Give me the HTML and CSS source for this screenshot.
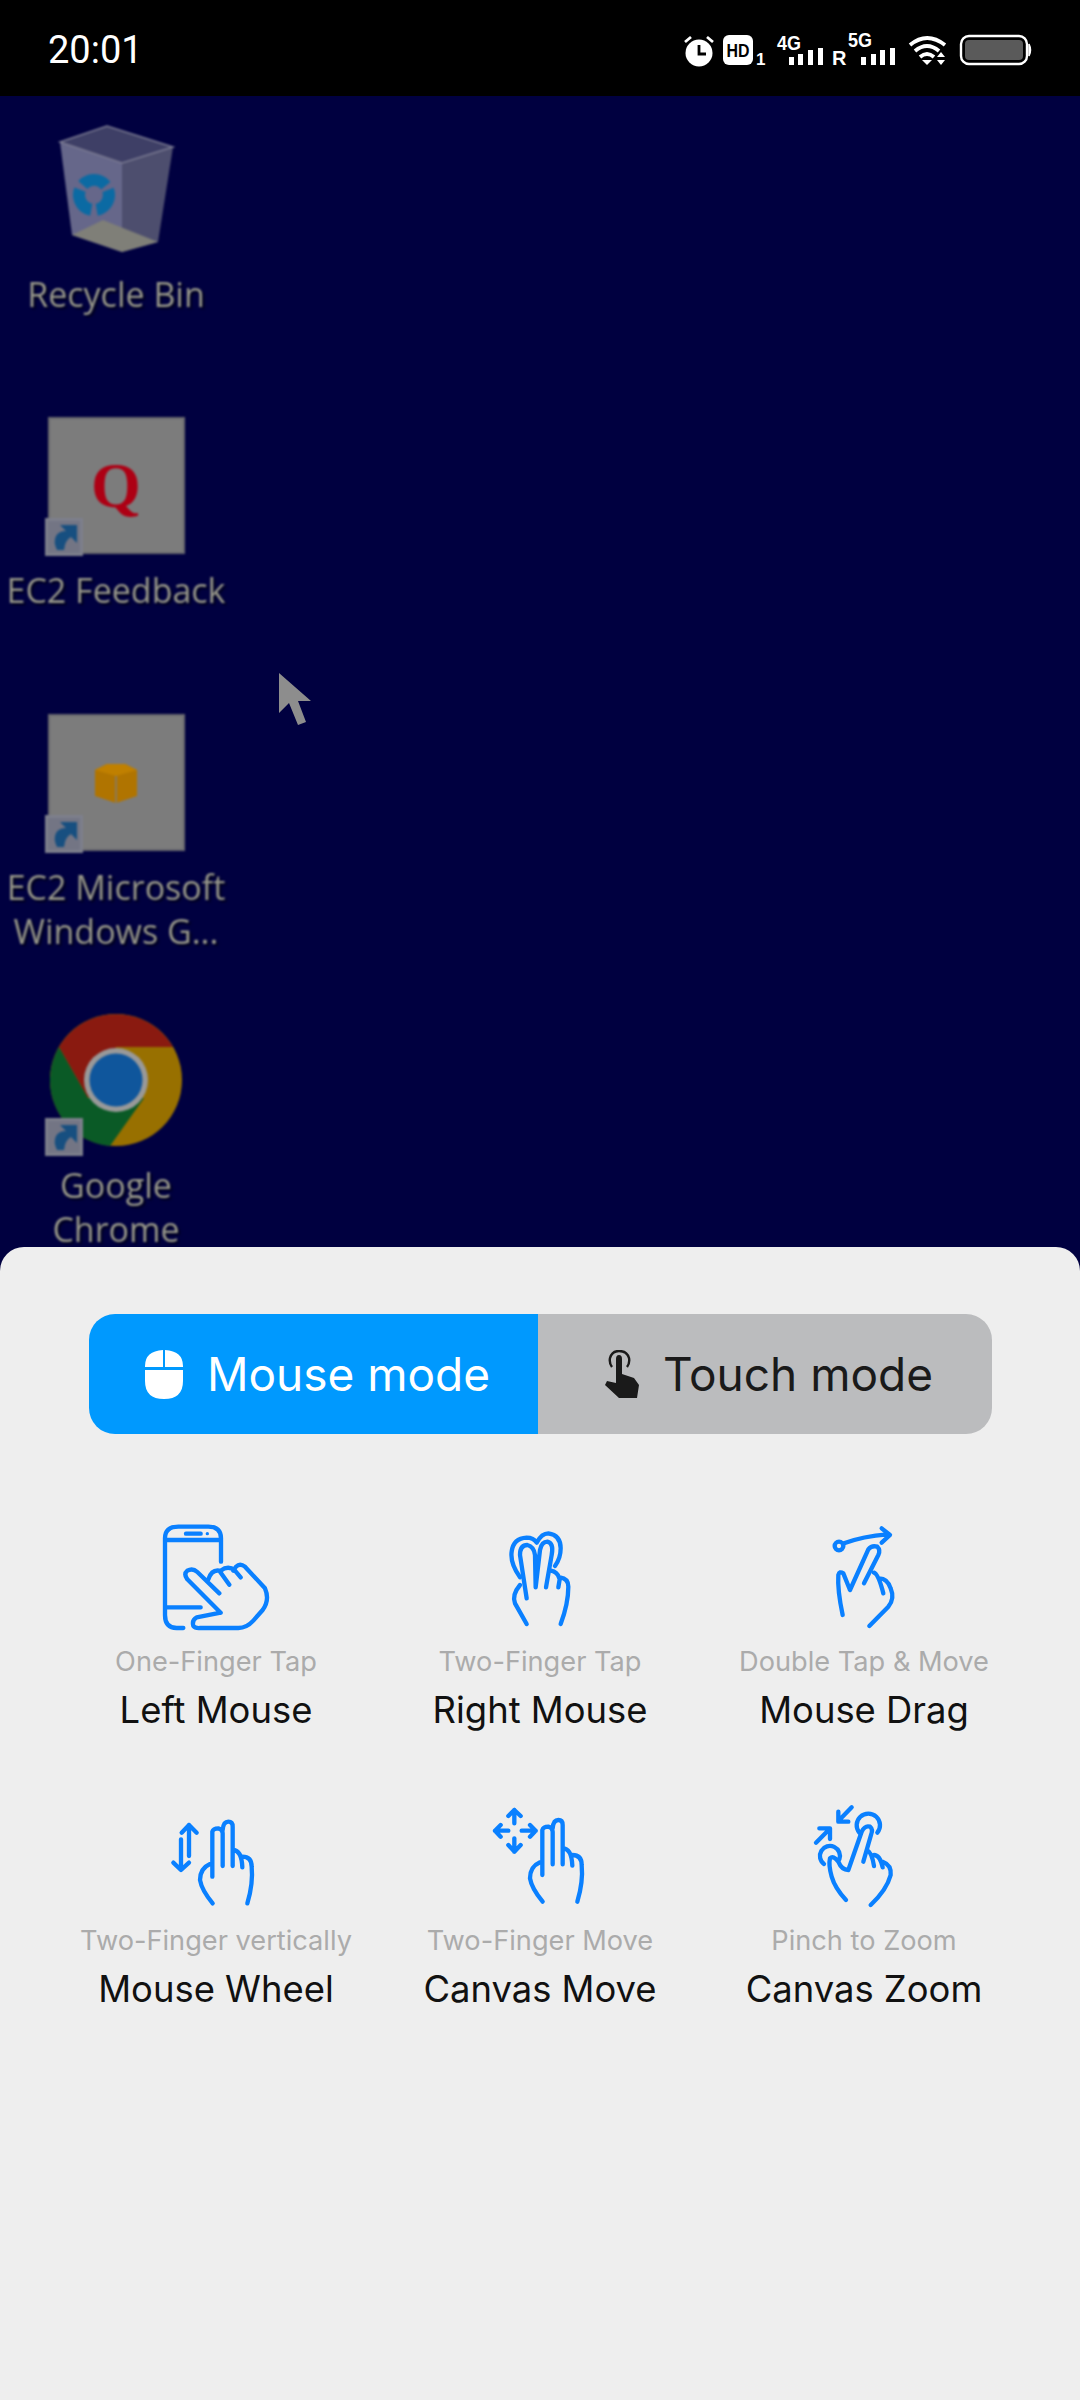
FILE: index.html
```html
<!DOCTYPE html>
<html lang="en">
<head>
<meta charset="utf-8">
<title>Remote desktop</title>
<link rel="stylesheet" href="styles.css">
</head>
<body>
<div class="screen">
  <header class="status">
    <span class="clock">20:01</span>
    <svg class="status-icons" viewBox="680 0 352 96" width="352" height="96">
      <circle cx="699" cy="53" r="13.5" fill="#fff"/>
      <path d="M699 45V54H706" fill="none" stroke="#000" stroke-width="2.8"/>
      <path d="M685 42L691 37M713 42L707 37" stroke="#fff" stroke-width="2.8"/>
      <rect x="723" y="35" width="30" height="30" rx="6" fill="#fff"/>
      <text x="738" y="57" class="st-hd" textLength="23" lengthAdjust="spacingAndGlyphs">HD</text>
      <text x="756" y="65" class="st-s">1</text>
      <text x="777" y="50" class="st-g" textLength="24" lengthAdjust="spacingAndGlyphs">4G</text>
      <path d="M789 57h5v8h-5zM798 54h5v11h-5zM808 50h5v15h-5zM818 48h5v17h-5z" fill="#fff"/>
      <text x="832" y="65" class="st-r">R</text>
      <text x="848" y="47" class="st-g" textLength="24" lengthAdjust="spacingAndGlyphs">5G</text>
      <path d="M861 57h5v8h-5zM871 54h5v11h-5zM880 50h5v15h-5zM890 48h5v17h-5z" fill="#fff"/>
      <path d="M910 45Q927 31 945 45M915 51Q927 41 939 51M920 57Q927 51 934 57" fill="none" stroke="#fff" stroke-width="3.8"/>
      <path d="M922 60H932L927 65Z" fill="#fff"/>
      <path d="M937 57L941 52L945 57ZM937 60H945L941 65Z" fill="#fff"/>
      <rect x="961" y="36" width="66" height="28" rx="8" fill="none" stroke="#fff" stroke-width="2.4"/>
      <rect x="965" y="40" width="58" height="20" rx="4" fill="#5a5a5a"/>
      <path d="M1029 44Q1032 50 1029 56Z" fill="#fff" stroke="#fff" stroke-width="1.5"/>
    </svg>
  </header>

  <main class="desktop">
    <div class="item item-bin">
      <svg class="item-icon" viewBox="0 0 137 137" width="137" height="137">
        <path d="M12 27L59 11L125 32L74 48Z" fill="#3e3f66"/>
        <path d="M12 27L74 48V137L24 120Z" fill="#66678a"/>
        <path d="M74 48L125 32L110 127L74 137Z" fill="#4d4e6e"/>
        <path d="M24 120L55 105L110 127L74 137Z" fill="#7f7f78"/>
        <path d="M12 27L59 11L125 32L74 48Z" fill="none" stroke="#7a7a92" stroke-width="1.5"/>
        <circle cx="46" cy="80" r="15" fill="none" stroke="#0b6aa3" stroke-width="12" stroke-dasharray="26 5.4" transform="rotate(-20 46 80)"/>
      </svg>
      <span class="item-label">Recycle Bin</span>
    </div>

    <div class="item item-q">
      <div class="tile">
        <span class="tile-q">Q</span>
        <svg class="badge" viewBox="0 0 38 38" width="38" height="38"><use href="#shortcut"/></svg>
      </div>
      <span class="item-label">EC2 Feedback</span>
    </div>

    <div class="item item-box">
      <div class="tile">
        <svg class="tile-box" viewBox="0 0 42 40" width="42" height="40">
          <path d="M0 7L12 1H30L42 7V33L21 40L0 33Z" fill="#b07400"/>
          <path d="M0 7L12 1H30L42 7L21 13Z" fill="#c08000"/>
          <path d="M21 13V40" stroke="#8c7a55" stroke-width="2"/>
        </svg>
        <svg class="badge" viewBox="0 0 38 38" width="38" height="38"><use href="#shortcut"/></svg>
      </div>
      <span class="item-label">EC2 Microsoft<br>Windows G...</span>
    </div>

    <div class="item item-chrome">
      <div class="tile-plain">
        <svg viewBox="0 0 137 137" width="137" height="137">
          <circle cx="68" cy="66" r="66" fill="#987000"/>
          <path d="M125 33A66 66 0 0 0 11 33L40 84L68 33Z" fill="#8a1a10"/>
          <path d="M11 33A66 66 0 0 0 62 132L96 84L40 84Z" fill="#0a5a26"/>
          <circle cx="68" cy="66" r="32" fill="#999"/>
          <circle cx="68" cy="66" r="26.5" fill="#0f569c"/>
        </svg>
        <svg class="badge" viewBox="0 0 38 38" width="38" height="38"><use href="#shortcut"/></svg>
      </div>
      <span class="item-label">Google<br>Chrome</span>
    </div>

    <svg class="cursor" viewBox="0 0 32 52" width="32" height="52">
      <path d="M0 0V40L10 30L19 52L27 49L19 28H32Z" fill="#8d8d8d"/>
    </svg>
  </main>

  <section class="panel">
    <div class="toggle">
      <div class="seg seg-on">
        <svg viewBox="0 0 38 49" width="38" height="49"><path d="M18 0V17H0V16Q0 1 18 0ZM20 0Q38 1 38 16V17H20ZM0 20H38V31Q38 49 19 49Q0 49 0 31Z" fill="#fff"/></svg>
        <span>Mouse mode</span>
      </div>
      <div class="seg seg-off">
        <svg viewBox="0 0 34 49" width="34" height="49">
          <path d="M7 17Q4 13 5 8Q7 1 14 1Q22 1 24 8Q25 13 22 17" fill="none" stroke="#1a1a1a" stroke-width="2.4"/>
          <path d="M11 9Q11 5 14 5Q17 5 17 9V24L29 28L34 35L32 48H14L0 35L2 31L11 33Z" fill="#1a1a1a"/>
        </svg>
        <span>Touch mode</span>
      </div>
    </div>

    <div class="grid">
      <div class="cell">
        <svg class="gest" viewBox="-12 0 540 420" width="180" height="140">
          <path d="M160 384H140Q105 384 105 345V115Q105 80 145 80H235Q273 80 273 115V185M105 120H273M105 322H212"/>
          <path d="M168 101H212"/><circle cx="232" cy="101" r="5" class="dot"/>
          <path d="M272 338L172 238Q160 222 172 212Q188 203 202 216L268 280M272 338L200 352Q185 360 190 378Q195 385 210 384H325Q350 384 370 362L398 330Q420 300 405 265L345 200Q330 188 318 200L310 212M235 238Q245 208 268 212L298 254M272 212Q295 195 315 212L332 232"/>
        </svg>
        <span class="sub">One-Finger Tap</span>
        <span class="main">Left Mouse</span>
      </div>
      <div class="cell">
        <svg class="gest" viewBox="0 0 420 420" width="140" height="140">
          <path d="M150 232Q120 190 125 155Q130 115 170 113Q190 113 200 128Q215 100 235 100Q272 105 272 145Q272 175 255 198"/>
          <path d="M170 295L150 165Q150 135 172 135Q192 140 195 165L197 262L210 150Q215 125 232 125Q252 130 245 165L228 262"/>
          <path d="M150 255Q125 285 135 310L170 372M272 372Q295 310 295 260Q295 235 270 232L265 262M243 212Q262 215 268 235"/>
        </svg>
        <span class="sub">Two-Finger Tap</span>
        <span class="main">Right Mouse</span>
      </div>
      <div class="cell">
        <svg class="gest" viewBox="-18 0 420 420" width="140" height="140">
          <circle cx="117" cy="138" r="13"/>
          <path d="M132 130Q190 108 262 103M245 85L270 105L245 128"/>
          <path d="M150 270L205 148Q215 135 232 140Q242 150 235 165L192 250M150 270L130 220Q118 212 115 225Q112 270 128 345M222 218Q235 222 250 280M238 235Q262 235 272 265Q285 295 265 320L208 378"/>
        </svg>
        <span class="sub">Double Tap &amp; Move</span>
        <span class="main">Mouse Drag</span>
      </div>
      <div class="cell">
        <svg class="gest" viewBox="-12 -33 420 420" width="140" height="140">
          <path d="M117 198V105M95 128L117 105L140 128M93 148V238M70 218L93 240L117 218"/>
          <path d="M187 260V125Q190 115 205 115Q218 118 218 130V228M218 120Q220 95 235 95Q248 95 248 110V228M248 180Q275 180 277 232M277 200Q305 200 305 230Q310 280 292 340M180 222Q150 235 150 270Q155 300 188 340"/>
        </svg>
        <span class="sub">Two-Finger vertically</span>
        <span class="main">Mouse Wheel</span>
      </div>
      <div class="cell">
        <svg class="gest" viewBox="0 -33 420 420" width="140" height="140">
          <path d="M133 100V60M115 78L133 60L152 78M115 122H75M92 105L75 122L92 140M155 122H197M180 105L197 122L180 140M133 145V185M115 165L133 185L152 165"/>
          <path transform="translate(30 -5)" d="M187 260V125Q190 115 205 115Q218 118 218 130V228M218 120Q220 95 235 95Q248 95 248 110V228M248 180Q275 180 277 232M277 200Q305 200 305 230Q310 280 292 340M180 222Q150 235 150 270Q155 300 188 340"/>
        </svg>
        <span class="sub">Two-Finger Move</span>
        <span class="main">Canvas Move</span>
      </div>
      <div class="cell">
        <svg class="gest" viewBox="-18 -33 420 420" width="140" height="140">
          <path d="M155 52L118 90M115 65V95H145M48 158L88 118M58 115H90V147"/>
          <path d="M178 128A35 35 0 1 1 232 128M72 222A30 30 0 1 1 118 208"/>
          <path d="M145 240L185 125Q195 105 210 110Q220 118 213 135L190 215M145 240Q125 240 115 215Q100 195 90 205Q85 225 95 260Q105 295 138 330M200 180Q215 185 222 228M222 195Q240 195 248 232M248 215Q275 225 272 255Q260 300 212 345"/>
        </svg>
        <span class="sub">Pinch to Zoom</span>
        <span class="main">Canvas Zoom</span>
      </div>
    </div>
  </section>
</div>

<svg class="defs" width="0" height="0" aria-hidden="true">
  <symbol id="shortcut" viewBox="0 0 38 38">
    <rect width="38" height="38" fill="#7d7f8c"/>
    <rect x="3" y="3" width="32" height="32" fill="#737584"/>
    <path d="M15 7H32V25L26 19Q20 22 19 32H12Q8 24 11 18Q14 13 21 13Z" fill="#174f80"/>
  </symbol>
</svg>
</body>
</html>
```
FILE: styles.css
```css
* { box-sizing: border-box; }
html, body { margin: 0; padding: 0; }
body { width: 1080px; height: 2400px; overflow: hidden; font-family: "Inter", "Roboto", sans-serif; }

.screen { width: 1080px; height: 2400px; background: #000040; display: flex; flex-direction: column; }

.status { height: 96px; background: #000; display: flex; align-items: center; justify-content: space-between; padding: 0 48px; flex: none; }
.clock { color: #fff; font-family: "Roboto", sans-serif; font-size: 38px; line-height: 96px; margin-top: 3px; }
.status-icons { display: block; }
.st-hd { font: 700 19px "Liberation Sans", sans-serif; fill: #000; text-anchor: middle; }
.st-s { font: 700 17px "Liberation Sans", sans-serif; fill: #fff; }
.st-g { font: 700 21px "Liberation Sans", sans-serif; fill: #fff; }
.st-r { font: 700 20px "Liberation Sans", sans-serif; fill: #fff; }

.desktop { position: relative; height: 1151px; flex: none; }
.item { position: absolute; left: 0; width: 232px; display: flex; flex-direction: column; align-items: center; filter: blur(0.8px); }
.item-bin { top: 19px; }
.item-q { top: 321px; }
.item-box { top: 618px; }
.item-chrome { top: 918px; }
.item-icon { display: block; }
.item-label { margin-top: 14px; color: #96968a; font-family: "Open Sans", sans-serif; font-size: 34px; line-height: 44px; text-align: center; text-shadow: 2px 2px 2px #00001a; white-space: nowrap; }
.item-bin .item-label { margin-top: 20px; }
.item-chrome .item-label { margin-top: 12px; }

.tile { position: relative; width: 137px; height: 137px; background: #7c7c7c; border: 2px solid #68686e; display: flex; align-items: center; justify-content: center; }
.tile-plain { position: relative; width: 137px; height: 137px; }
.tile-plain svg:first-child { display: block; }
.tile-q { color: #ad0014; font-family: "Liberation Serif", serif; font-weight: 700; font-size: 64px; line-height: 1; }
.tile-box { display: block; }
.badge { position: absolute; left: -5px; bottom: -4px; display: block; }
.tile-plain .badge { left: -3px; bottom: -5px; }
.cursor { position: absolute; left: 279px; top: 577px; display: block; filter: blur(0.5px); }

.panel { position: relative; flex: 1; background: #eee; border-radius: 24px 24px 0 0; padding: 67px 0 0; }
.toggle { display: flex; height: 120px; margin: 0 88px 0 89px; border-radius: 26px; overflow: hidden; font-size: 46px; }
.seg { display: flex; align-items: center; justify-content: center; gap: 24px; padding-left: 8px; }
.seg svg { display: block; flex: none; }
.seg-on { width: 449px; background: #0099fe; color: #fff; }
.seg-off { width: 454px; background: #bbbcbe; color: #1a1a1a; }

.grid { display: grid; grid-template-columns: repeat(3, 324px); grid-auto-rows: 279px; margin: 66px 54px 0; }
.cell { display: flex; flex-direction: column; align-items: center; }
.gest { display: block; flex: none; fill: none; stroke: #0a80ff; stroke-width: 13; stroke-linecap: round; stroke-linejoin: round; }
.gest .dot { fill: #0a80ff; stroke: none; }
.sub { margin-top: 4px; color: #ababab; font-size: 27.2px; line-height: 36px; white-space: nowrap; }
.main { margin-top: 8px; color: #111; font-size: 36.4px; line-height: 44px; white-space: nowrap; }
.defs { position: absolute; }
```
